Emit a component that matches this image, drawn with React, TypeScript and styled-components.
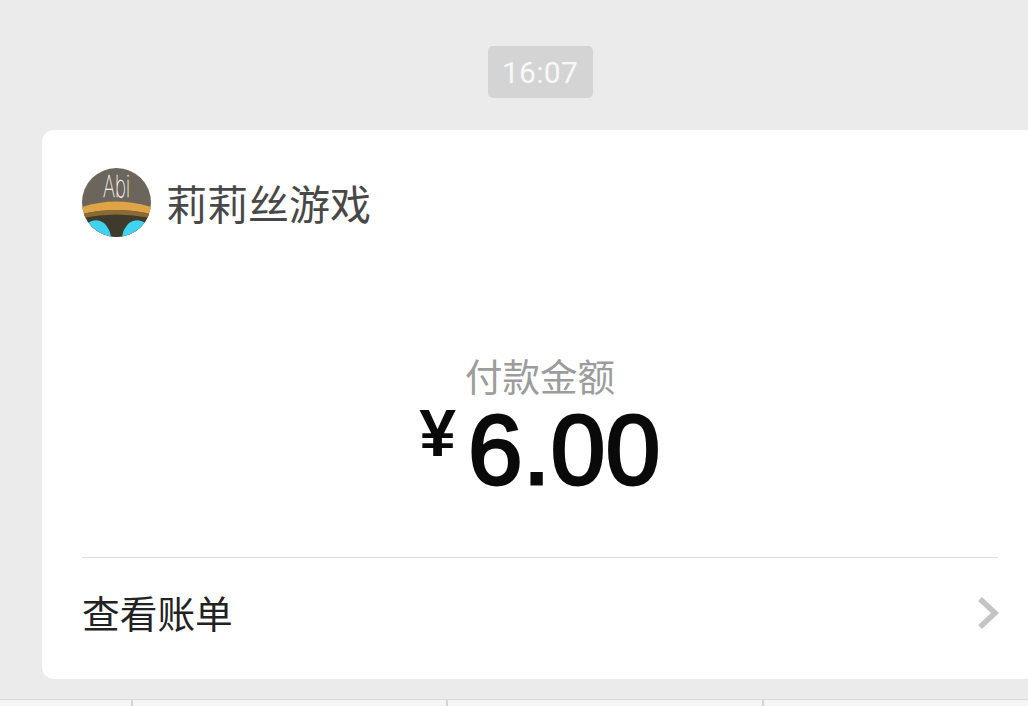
import React from "react";
import styled, { createGlobalStyle } from "styled-components";

const Global = createGlobalStyle`
  html, body { margin: 0; padding: 0; background: #ebebeb; overflow: hidden; }
  #root { width: 1028px; height: 706px; overflow: hidden; }
`;
const Page = styled.div`
  width: 1028px; height: 706px; display: flex; flex-direction: column; overflow: hidden;
  background: #ebebeb; font-family: "Noto Sans CJK SC", "Roboto", sans-serif;
`;
const Chat = styled.div`
  flex: 1; min-height: 0; width: 996px; margin-left: 42px; padding-top: 46px;
  display: flex; flex-direction: column; align-items: center;
`;
const TimePill = styled.div`
  width: 105px; height: 52px; border-radius: 5px; background: #d4d4d4; color: #f8f8f8;
  font: 400 30px/54px Roboto, sans-serif; text-align: center; letter-spacing: 0.3px;
`;
const Card = styled.div`
  margin-top: 32px; width: 100%; height: 549px; box-sizing: border-box; background: #fff;
  border-radius: 12px; padding: 38px 40px 0; display: flex; flex-direction: column;
`;
const Merchant = styled.div`display: flex; align-items: center; gap: 15px; height: 69px;`;
const MerchantName = styled.div`font-size: 41px; font-weight: 400; line-height: 69px; color: #484848;`;
const Body = styled.div`
  height: 321px; box-sizing: border-box; padding-top: 118px; display: flex; flex-direction: column;
  align-items: center; border-bottom: 1px solid #dedede;
`;
const Label = styled.div`font-size: 37.5px; font-weight: 400; line-height: 40px; color: #9c9c9c;`;
const Amount = styled.div`
  display: flex; align-items: flex-start; height: 100px; color: #0a0a0a;
  font-family: "Liberation Sans", sans-serif; padding-top: 5px;
`;
const Currency = styled.span`font-size: 66px; font-weight: 700; line-height: 68px; margin-top: -1px; margin-right: 12px;`;
const Value = styled.span`
  font-size: 98px; font-weight: 400; line-height: 100px; letter-spacing: 0.5px;
  -webkit-text-stroke: 3px #0a0a0a;
`;
const Footer = styled.div`flex: 1; display: flex; align-items: center; justify-content: space-between; padding-bottom: 13px;`;
const FooterText = styled.div`font-size: 37.7px; font-weight: 400; color: #222; line-height: 50px;`;
const ChevronBox = styled.div`display: flex; margin: 2px -3px 0 0;`;
const TabBar = styled.div`
  height: 6px; background: #f5f5f5; border-top: 1px solid #d9d9d9; display: flex; padding-left: 131px;
`;
const TabCell = styled.div<{ $w: number }>`
  width: ${(p) => p.$w}px; box-sizing: border-box; border-left: 2px solid #d4d4d4;
`;

const Avatar = () => (
  <svg width="69" height="69" viewBox="0 0 69 69">
    <defs><clipPath id="av"><circle cx="34.5" cy="34.5" r="34.5" /></clipPath></defs>
    <g clipPath="url(#av)">
      <rect width="69" height="69" fill="#6c655b" />
      <path d="M0 48 Q34 42 69 48 V69 H0Z" fill="#3e3a2c" />
      <path d="M0 39 Q34 28 69 39 V46 Q34 38 0 46Z" fill="#dfa445" />
      <path d="M0 46 Q34 38 69 46 V50 Q34 43 0 50Z" fill="#8a6a33" />
      <path d="M4 56 Q14 49 22 55 Q28 61 29 69 H4Z" fill="#3fd3f0" />
      <path d="M65 56 Q55 49 47 55 Q41 61 40 69 H65Z" fill="#3fd3f0" />
      <text x="21" y="29" fontFamily="Inter, sans-serif" fontSize="30" fontWeight="100" fill="#fff" stroke="#fff" strokeWidth="0.3" textLength="27" lengthAdjust="spacingAndGlyphs">Abi</text>
    </g>
  </svg>
);
const Chevron = () => (
  <svg width="24" height="34" viewBox="0 0 24 34">
    <path d="M3 3 L18 17 L3 31" fill="none" stroke="#c4c4c4" strokeWidth="5.5" />
  </svg>
);

export default function App() {
  return (
    <Page>
      <Global />
      <Chat>
        <TimePill>16:07</TimePill>
        <Card>
          <Merchant>
            <Avatar />
            <MerchantName>莉莉丝游戏</MerchantName>
          </Merchant>
          <Body>
            <Label>付款金额</Label>
            <Amount>
              <Currency>¥</Currency>
              <Value>6.00</Value>
            </Amount>
          </Body>
          <Footer>
            <FooterText>查看账单</FooterText>
            <ChevronBox><Chevron /></ChevronBox>
          </Footer>
        </Card>
      </Chat>
      <TabBar>
        <TabCell $w={315} />
        <TabCell $w={316} />
        <TabCell $w={266} />
      </TabBar>
    </Page>
  );
}
